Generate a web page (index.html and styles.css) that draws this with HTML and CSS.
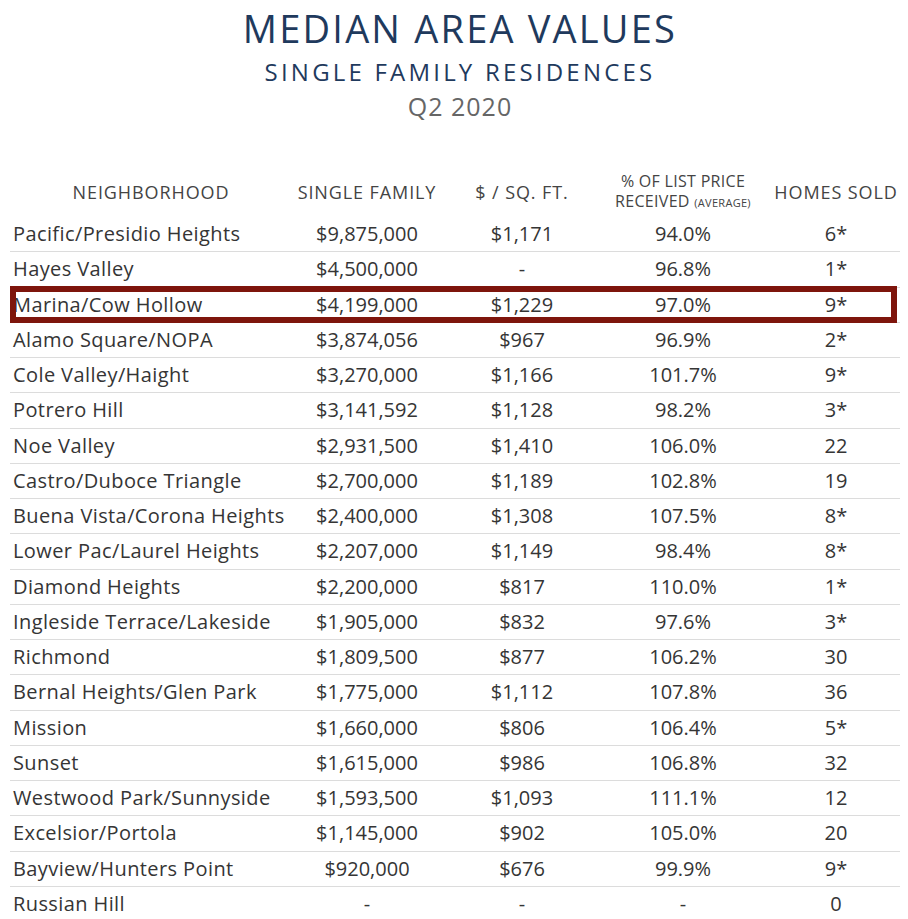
FILE: index.html
```html
<!DOCTYPE html>
<html>
<head>
<meta charset="utf-8">
<link rel="stylesheet" href="styles.css">
</head>
<body>
<div class="page">
  <header class="heading">
    <h1 class="title">MEDIAN AREA VALUES</h1>
    <h2 class="subtitle">SINGLE FAMILY RESIDENCES</h2>
    <p class="period">Q2 2020</p>
  </header>
  <div class="table">
    <div class="thead">
      <div class="th">NEIGHBORHOOD</div>
      <div class="th">SINGLE FAMILY</div>
      <div class="th">$ / SQ. FT.</div>
      <div class="th two">% OF LIST PRICE<br>RECEIVED <span class="small">(AVERAGE)</span></div>
      <div class="th">HOMES SOLD</div>
    </div>
    <div class="row"><div class="name">Pacific/Presidio Heights</div><div>$9,875,000</div><div>$1,171</div><div>94.0%</div><div>6*</div></div>
    <div class="row"><div class="name">Hayes Valley</div><div>$4,500,000</div><div>-</div><div>96.8%</div><div>1*</div></div>
    <div class="row highlight"><div class="name">Marina/Cow Hollow</div><div>$4,199,000</div><div>$1,229</div><div>97.0%</div><div>9*</div></div>
    <div class="row"><div class="name">Alamo Square/NOPA</div><div>$3,874,056</div><div>$967</div><div>96.9%</div><div>2*</div></div>
    <div class="row"><div class="name">Cole Valley/Haight</div><div>$3,270,000</div><div>$1,166</div><div>101.7%</div><div>9*</div></div>
    <div class="row"><div class="name">Potrero Hill</div><div>$3,141,592</div><div>$1,128</div><div>98.2%</div><div>3*</div></div>
    <div class="row"><div class="name">Noe Valley</div><div>$2,931,500</div><div>$1,410</div><div>106.0%</div><div>22</div></div>
    <div class="row"><div class="name">Castro/Duboce Triangle</div><div>$2,700,000</div><div>$1,189</div><div>102.8%</div><div>19</div></div>
    <div class="row"><div class="name">Buena Vista/Corona Heights</div><div>$2,400,000</div><div>$1,308</div><div>107.5%</div><div>8*</div></div>
    <div class="row"><div class="name">Lower Pac/Laurel Heights</div><div>$2,207,000</div><div>$1,149</div><div>98.4%</div><div>8*</div></div>
    <div class="row"><div class="name">Diamond Heights</div><div>$2,200,000</div><div>$817</div><div>110.0%</div><div>1*</div></div>
    <div class="row"><div class="name">Ingleside Terrace/Lakeside</div><div>$1,905,000</div><div>$832</div><div>97.6%</div><div>3*</div></div>
    <div class="row"><div class="name">Richmond</div><div>$1,809,500</div><div>$877</div><div>106.2%</div><div>30</div></div>
    <div class="row"><div class="name">Bernal Heights/Glen Park</div><div>$1,775,000</div><div>$1,112</div><div>107.8%</div><div>36</div></div>
    <div class="row"><div class="name">Mission</div><div>$1,660,000</div><div>$806</div><div>106.4%</div><div>5*</div></div>
    <div class="row"><div class="name">Sunset</div><div>$1,615,000</div><div>$986</div><div>106.8%</div><div>32</div></div>
    <div class="row"><div class="name">Westwood Park/Sunnyside</div><div>$1,593,500</div><div>$1,093</div><div>111.1%</div><div>12</div></div>
    <div class="row"><div class="name">Excelsior/Portola</div><div>$1,145,000</div><div>$902</div><div>105.0%</div><div>20</div></div>
    <div class="row"><div class="name">Bayview/Hunters Point</div><div>$920,000</div><div>$676</div><div>99.9%</div><div>9*</div></div>
    <div class="row last"><div class="name">Russian Hill</div><div>-</div><div>-</div><div>-</div><div>0</div></div>
  </div>
</div>
</body>
</html>
```

FILE: styles.css
```css
html {
  margin: 0;
  padding: 0;
  background: #ffffff;
  overflow: hidden;
}

body {
  margin: 8px;
  font-family: "Open Sans", "Noto Sans", sans-serif;
  color: #333333;
}

.heading {
  padding-left: 12px;
  text-align: center;
}

.title {
  margin: 0;
  font-size: 38px;
  line-height: 40px;
  font-weight: 400;
  letter-spacing: 2.2px;
  color: #1f3a5d;
}

.subtitle {
  margin: 10px 0 0;
  font-size: 24px;
  line-height: 28px;
  font-weight: 400;
  letter-spacing: 3.2px;
  color: #1f3a5d;
}

.period {
  margin: 5px 0 0;
  font-size: 25px;
  line-height: 30px;
  font-weight: 400;
  letter-spacing: 1px;
  color: #666666;
}

.table {
  margin: 46px 0 0 2px;
  width: 898px;
}

.thead,
.row {
  display: grid;
  grid-template-columns: 282px 150px 160px 162px 144px;
  align-items: center;
}

.thead {
  height: 50px;
}

.th {
  text-align: center;
  font-size: 18px;
  line-height: 20px;
  color: #444444;
  letter-spacing: 0.9px;
}

.th.two {
  font-size: 16px;
  line-height: 20px;
  letter-spacing: 0.3px;
}

.small {
  font-size: 11px;
}

.row {
  height: 34.25px;
  border-bottom: 1px solid #dcdcdc;
  font-size: 20px;
  line-height: 24px;
  text-align: center;
  color: #353535;
}

.row.last {
  border-bottom: none;
}

.row .name {
  text-align: left;
  padding-left: 3px;
  letter-spacing: 0.4px;
}

.highlight {
  position: relative;
}

.highlight::after {
  content: "";
  position: absolute;
  left: 0;
  right: 11px;
  top: -2px;
  bottom: -1px;
  border: 6px solid #7e150c;
}
```
